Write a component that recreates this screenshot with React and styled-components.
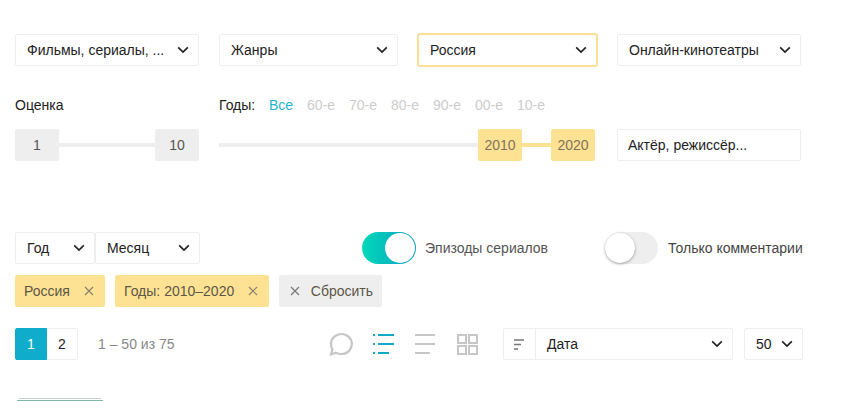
import styled, { createGlobalStyle } from 'styled-components';

const GlobalStyle = createGlobalStyle`
  html, body {
    margin: 0;
    padding: 0;
    background: #fff;
  }
  body {
    font-family: "Liberation Sans", Arial, sans-serif;
    font-size: 14px;
    color: #222;
  }
`;

const Page = styled.div`
  width: 858px;
  height: 401px;
  padding: 34px 0 0 15px;
  box-sizing: border-box;
  overflow: hidden;
`;

const Row = styled.div`
  display: flex;
  align-items: center;
  height: 32px;
  gap: ${p => p.$gap || 0}px;
  margin-top: ${p => p.$top || 0}px;
`;

const Select = styled.div`
  display: flex;
  align-items: center;
  justify-content: space-between;
  box-sizing: border-box;
  width: ${p => p.$width}px;
  height: 32px;
  padding: 0 9px 0 11px;
  margin-right: ${p => p.$after || 0}px;
  background: #fff;
  border: 1px solid ${p => p.$active ? '#fbdf94' : '#eee'};
  border-radius: 2px;
  box-shadow: ${p => p.$active ? '0 0 0 1px #fbdf94' : 'none'};
  color: #222;
  white-space: nowrap;
`;

const FilterGrid = styled.div`
  display: grid;
  grid-template-columns: 184px 378px 184px;
  column-gap: 20px;
  row-gap: 14px;
  margin-top: 29px;
`;

const Label = styled.div`
  display: flex;
  align-items: center;
  height: 20px;
`;

const Decade = styled.span`
  width: 28px;
  margin-right: ${p => p.$active ? 10 : 14}px;
  white-space: nowrap;
  color: ${p => p.$active ? '#1fb3cc' : '#ccc'};
`;

const YearsTitle = styled.span`
  width: 50px;
`;

const Range = styled.div`
  display: flex;
  align-items: center;
  width: ${p => p.$width}px;
  height: 32px;
`;

const Track = styled.div`
  height: 4px;
  flex: 1;
  background: ${p => p.$on ? '#fee293' : '#eee'};
`;

const SelectedTrack = styled(Track)`
  flex: none;
  width: 29px;
`;

const Handle = styled.div`
  display: flex;
  align-items: center;
  justify-content: center;
  flex: none;
  width: 44px;
  height: 32px;
  border-radius: 2px;
  background: ${p => p.$on ? '#fee293' : '#eee'};
  color: ${p => p.$on ? '#81735a' : '#555'};
`;

const SearchBox = styled.div`
  display: flex;
  align-items: center;
  box-sizing: border-box;
  height: 32px;
  padding-left: 10px;
  border: 1px solid #eee;
  border-radius: 2px;
`;

const SwitchWrap = styled.div`
  display: flex;
  align-items: center;
  margin-left: ${p => p.$left}px;
  color: ${p => p.$dim ? '#555' : '#444'};
`;

const SwitchTrack = styled.div`
  display: flex;
  justify-content: ${p => p.$on ? 'flex-end' : 'flex-start'};
  align-items: center;
  box-sizing: border-box;
  width: ${p => p.$on ? 54 : 53}px;
  height: 32px;
  margin-right: ${p => p.$on ? 9 : 10}px;
  padding-right: ${p => p.$on ? 1 : 0}px;
  border-radius: 16px;
  background: ${p => p.$on ? 'linear-gradient(90deg, #00d8b8, #0e9fc4)' : '#eee'};
`;

const Knob = styled.div`
  box-sizing: border-box;
  width: 30px;
  height: 30px;
  border-radius: 50%;
  background: #fff;
  box-shadow: ${p => p.$on ? 'none' : '0 1px 3px rgba(0, 0, 0, 0.35)'};
`;

const Chip = styled.div`
  display: flex;
  align-items: center;
  justify-content: space-between;
  box-sizing: border-box;
  width: ${p => p.$width}px;
  height: 32px;
  padding: 0 ${p => p.$plain ? 9 : 11}px 0 ${p => p.$plain ? 11 : 9}px;
  border-radius: 2px;
  background: ${p => p.$plain ? '#eee' : '#fee293'};
  color: #5c5648;
  white-space: nowrap;
`;

const PageCell = styled.div`
  display: flex;
  align-items: center;
  justify-content: center;
  box-sizing: border-box;
  width: ${p => p.$active ? 32 : 31}px;
  height: 32px;
  border: 1px solid ${p => p.$active ? '#0fadcb' : '#eee'};
  border-left-width: ${p => p.$active ? 1 : 0}px;
  border-radius: ${p => p.$active ? '2px 0 0 2px' : '0 2px 2px 0'};
  background: ${p => p.$active ? '#0fadcb' : '#fff'};
  color: ${p => p.$active ? '#fff' : '#222'};
`;

const PageInfo = styled.div`
  margin-left: 20px;
  width: 231px;
  color: #888;
`;

const ViewIcons = styled.div`
  display: flex;
  align-items: center;
  width: 174px;
`;

const IconSvg = styled.svg`
  flex: none;
  margin-right: ${p => p.$after || 0}px;
`;

const SortIcon = styled.div`
  display: flex;
  align-items: center;
  justify-content: center;
  flex: none;
  width: 31px;
  height: 30px;
  margin-left: -11px;
  margin-right: 11px;
  border-right: 1px solid #eee;
`;

const Grow = styled.span`
  flex: 1;
`;

const Thumb = styled.div`
  width: 86px;
  margin: 38px 0 0 2px;
`;

const ThumbTop = styled.div`
  height: 1px;
  margin: 0 2px 1px;
  background: #c6d2ce;
`;

const ThumbLine = styled.div`
  height: 1px;
  background: #7fb8ab;
`;

const Chevron = () => (
  <IconSvg width="12" height="8" viewBox="0 0 12 8" fill="none">
    <path d="M1.2 1.4 L6 6 L10.8 1.4" stroke="#222" strokeWidth="1.7" />
  </IconSvg>
);

const Cross = ({ color = '#8a8270' }) => (
  <IconSvg width="10" height="10" viewBox="0 0 10 10" fill="none">
    <path d="M1 1 L9 9 M9 1 L1 9" stroke={color} strokeWidth="1.2" />
  </IconSvg>
);

const CommentIcon = () => (
  <IconSvg $after={19} width="24" height="24" viewBox="0 0 24 24" fill="none">
    <path
      d="M12.5 2 C18.3 2 22.8 6.4 22.8 12 C22.8 17.6 18.3 22 12.5 22 C10.3 22 8.5 21.5 6.8 20.6 L2 22.2 L3.4 17.4 C2.5 15.9 2 14 2 12 C2 6.4 6.7 2 12.5 2 Z"
      stroke="#c6c6c6"
      strokeWidth="2.2"
    />
  </IconSvg>
);

const ListIcon = () => (
  <IconSvg $after={21} width="22" height="22" viewBox="0 0 22 22" fill="none">
    <path
      d="M1 2 H3 M1 11 H3 M1 20 H3 M6 2 H22 M6 11 H22 M6 20 H17"
      stroke="#12a9c6"
      strokeWidth="2"
    />
  </IconSvg>
);

const LinesIcon = () => (
  <IconSvg $after={21} width="21" height="22" viewBox="0 0 21 22" fill="none">
    <path d="M0 2 H20 M0 11 H20 M0 20 H15" stroke="#c6c6c6" strokeWidth="2" />
  </IconSvg>
);

const GridIcon = () => (
  <IconSvg width="21" height="21" viewBox="0 0 21 21" fill="none">
    <path
      d="M1 1 H9 V9 H1 Z M12 1 H20 V9 H12 Z M1 12 H9 V20 H1 Z M12 12 H20 V20 H12 Z"
      stroke="#c6c6c6"
      strokeWidth="2"
    />
  </IconSvg>
);

const SortLines = () => (
  <IconSvg width="11" height="11" viewBox="0 0 11 11" fill="none">
    <path d="M0 1 H10 M0 5.5 H7 M0 10 H4" stroke="#777" strokeWidth="1.6" />
  </IconSvg>
);

const DECADES = ['60-е', '70-е', '80-е', '90-е', '00-е', '10-е'];

const App = () => (
  <Page>
    <GlobalStyle />
    <Row $gap={20}>
      <Select $width={184}>Фильмы, сериалы, ...<Chevron /></Select>
      <Select $width={179}>Жанры<Chevron /></Select>
      <Select $width={179} $active>Россия<Chevron /></Select>
      <Select $width={184}>Онлайн-кинотеатры<Chevron /></Select>
    </Row>

    <FilterGrid>
      <Label>Оценка</Label>
      <Label>
        <YearsTitle>Годы:</YearsTitle>
        <Decade $active>Все</Decade>
        {DECADES.map(d => <Decade key={d}>{d}</Decade>)}
      </Label>
      <div />
      <Range $width={184}>
        <Handle>1</Handle>
        <Track />
        <Handle>10</Handle>
      </Range>
      <Range $width={376}>
        <Track />
        <Handle $on>2010</Handle>
        <SelectedTrack $on />
        <Handle $on>2020</Handle>
      </Range>
      <SearchBox>Актёр, режиссёр...</SearchBox>
    </FilterGrid>

    <Row $top={71}>
      <Select $width={80}>Год<Chevron /></Select>
      <Select $width={105}>Месяц<Chevron /></Select>
      <SwitchWrap $left={162} $dim>
        <SwitchTrack $on><Knob $on /></SwitchTrack>
        Эпизоды сериалов
      </SwitchWrap>
      <SwitchWrap $left={57}>
        <SwitchTrack><Knob /></SwitchTrack>
        Только комментарии
      </SwitchWrap>
    </Row>

    <Row $top={11} $gap={10}>
      <Chip $width={90}>Россия<Cross /></Chip>
      <Chip $width={154}>Годы: 2010–2020<Cross /></Chip>
      <Chip $width={103} $plain><Cross color="#777" />Сбросить</Chip>
    </Row>

    <Row $top={21}>
      <PageCell $active>1</PageCell>
      <PageCell>2</PageCell>
      <PageInfo>1 – 50 из 75</PageInfo>
      <ViewIcons>
        <CommentIcon />
        <ListIcon />
        <LinesIcon />
        <GridIcon />
      </ViewIcons>
      <Select $width={230} $after={11}>
        <SortIcon><SortLines /></SortIcon>
        Дата
        <Grow />
        <Chevron />
      </Select>
      <Select $width={59}>50<Chevron /></Select>
    </Row>

    <Thumb>
      <ThumbTop />
      <ThumbLine />
    </Thumb>
  </Page>
);

export default App;
